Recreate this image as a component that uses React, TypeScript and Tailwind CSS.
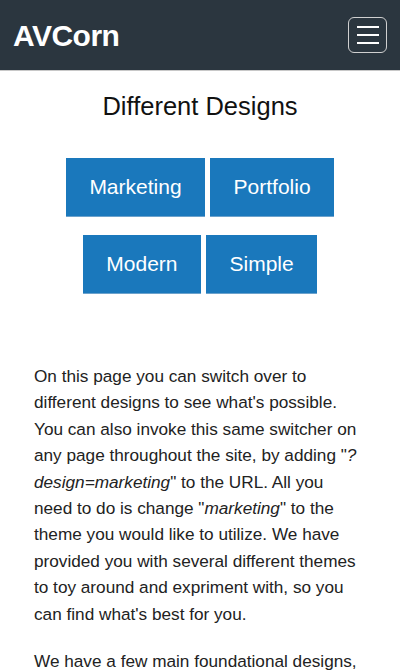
import React from 'react'

const DESIGNS = [['Marketing', 'Portfolio'], ['Modern', 'Simple']]

export default function App() {
  return (
    <div className="min-h-screen bg-white font-['Liberation_Sans',Arial,sans-serif] text-[#222]">
      <header className="h-[71px] bg-[#2b363f] border-b border-[#c8c8c8] flex items-center justify-between pl-[13px] pr-[13px]">
        <span className="text-white text-[30px] font-bold tracking-[-0.5px]">AVCorn</span>
        <button className="w-[39px] h-[36px] border border-[#d0d0d0] rounded-[6px] flex flex-col items-center justify-center gap-[6px]">
          <span className="block w-[22px] h-[2px] bg-white" />
          <span className="block w-[22px] h-[2px] bg-white" />
          <span className="block w-[22px] h-[2px] bg-white" />
        </button>
      </header>

      <main>
        <h1 className="text-center text-[25.5px] leading-[28px] mt-[21px] text-[#111]">Different Designs</h1>

        <div className="flex flex-col items-center gap-[18px] mt-[38px]">
          {DESIGNS.map((row, i) => (
            <div key={i} className="flex gap-[5px]">
              {row.map((d) => (
                <button key={d} className="bg-[#1a78bc] text-white text-[21px] leading-[24px] h-[59px] px-[23.5px] border-b border-[#6ca2cc]">
                  {d}
                </button>
              ))}
            </div>
          ))}
        </div>

        <div className="px-[34px] mt-[69px] text-[17.2px] leading-[26.4px]">
          <p>
            On this page you can switch over to different designs to see what's possible. You can also invoke this
            same switcher on any page throughout the site, by adding "<em>?design=marketing</em>" to the URL. All you
            need to do is change "<em>marketing</em>" to the theme you would like to utilize. We have provided you
            with several different themes to toy around and expriment with, so you can find what's best for you.
          </p>
          <p className="mt-[21px]">
            We have a few main foundational designs, each one built for a different purpose and easy to customize.
          </p>
        </div>
      </main>
    </div>
  )
}
